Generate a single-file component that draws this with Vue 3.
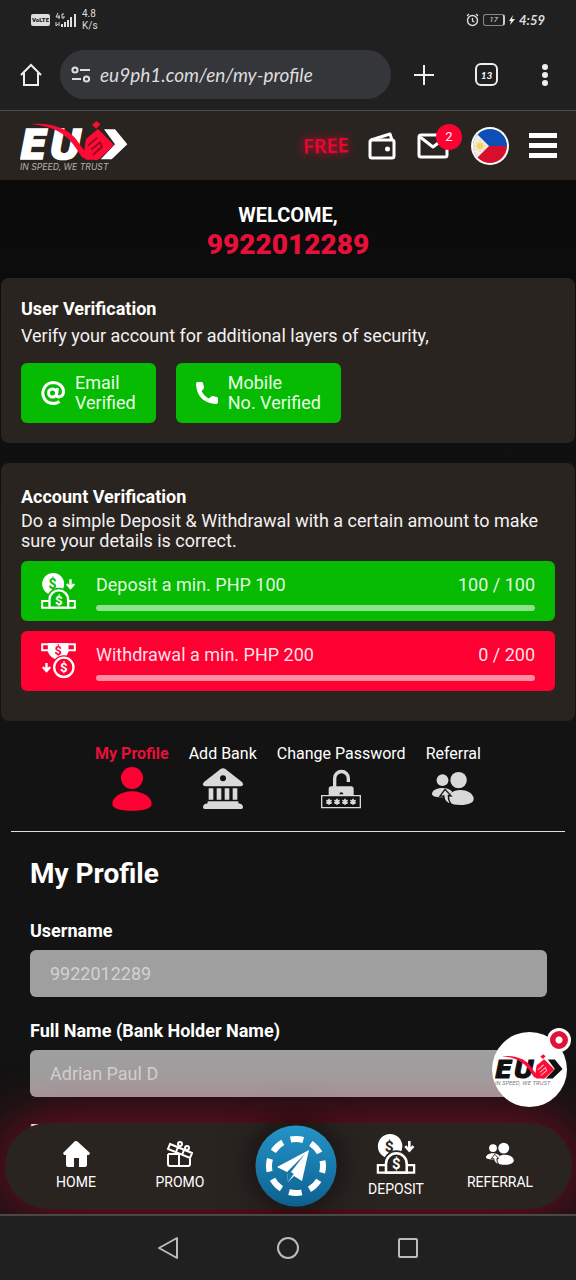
<script setup>
import { ref } from 'vue'

const tasks = [
  { id: 'deposit', label: 'Deposit a min. PHP 100', progress: '100 / 100', icon: '#icon-deposit' },
  { id: 'withdrawal', label: 'Withdrawal a min. PHP 200', progress: '0 / 200', icon: '#icon-withdraw' },
]

const tabs = [
  { label: 'My Profile', icon: '#icon-user', active: true },
  { label: 'Add Bank', icon: '#icon-bank' },
  { label: 'Change Password', icon: '#icon-password' },
  { label: 'Referral', icon: '#icon-referral' },
]

const username = ref('9922012289')
const fullName = ref('Adrian Paul D')
</script>

<template>
  <div class="phone">
    <svg class="defs" aria-hidden="true">
      <symbol id="logo" viewBox="0 0 324 150">
        <text y="113" font-family="DejaVu Sans, sans-serif" font-weight="700" font-style="italic" font-size="122" fill="currentColor" stroke="currentColor" stroke-width="5"><tspan x="0">E</tspan><tspan x="88">U</tspan></text>
        <path d="M252 25h33l37 45-47 45h-33l43-45z" fill="currentColor" />
        <path d="M34 9C92 4 142 22 166 52c14 18 24 36 34 46l-10 14C164 84 150 20 34 9z" fill="#ff0a35" />
        <path d="M216 12l13-12 12 10-12 13z" fill="#ff0a35" />
        <path d="M198 54l36-30 48 48-44 42q-6 4-16 2h-24q-12-8-6-22z" fill="#ff0a35" />
        <path d="M204 74l28-24M214 86l26-22 6 14-28 24" fill="none" stroke="var(--logo-cut)" stroke-width="5" />
        <text x="0" y="147" font-family="Inter, sans-serif" font-style="italic" font-size="26" fill="var(--logo-sub)">IN SPEED, WE TRUST</text>
      </symbol>

      <symbol id="icon-deposit" viewBox="0 0 104 108">
        <circle cx="36" cy="33" r="33" fill="currentColor" />
        <text x="34" y="49" text-anchor="middle" font-family="Roboto, sans-serif" font-weight="700" font-size="42" fill="var(--cut)">$</text>
        <circle cx="53" cy="80" r="36" fill="var(--cut)" />
        <path d="M3 84h98v20H3z" fill="none" stroke="currentColor" stroke-width="6" />
        <path d="M25 104V80a28 28 0 0 1 56 0v24z" fill="var(--cut)" stroke="currentColor" stroke-width="7" />
        <text x="53" y="95" text-anchor="middle" font-family="Roboto, sans-serif" font-weight="700" font-size="40" fill="currentColor">$</text>
        <path d="M88 19v26M77 33l11 12 11-12" fill="none" stroke="currentColor" stroke-width="7" />
      </symbol>

      <symbol id="icon-withdraw" viewBox="0 0 104 108">
        <path d="M3 4h98v18H3z" fill="none" stroke="currentColor" stroke-width="6" />
        <path d="M20 0h62v26q-8 24-31 24-22-2-31-24z" fill="currentColor" />
        <text x="51" y="36" text-anchor="middle" font-family="Roboto, sans-serif" font-weight="700" font-size="38" fill="var(--cut)">$</text>
        <circle cx="68" cy="73" r="36" fill="var(--cut)" />
        <circle cx="68" cy="73" r="29" fill="none" stroke="currentColor" stroke-width="7" />
        <text x="68" y="87" text-anchor="middle" font-family="Roboto, sans-serif" font-weight="700" font-size="40" fill="currentColor">$</text>
        <path d="M16 60v24M5 72l11 12 11-12" fill="none" stroke="currentColor" stroke-width="7" />
      </symbol>

      <symbol id="icon-user" viewBox="0 0 120 132">
        <circle cx="60" cy="33" r="33" fill="currentColor" />
        <path d="M60 73c36 0 59 20 59 37 0 14-20 21-59 21S1 124 1 110c0-17 23-37 59-37z" fill="currentColor" />
      </symbol>

      <symbol id="icon-bank" viewBox="0 0 120 132">
        <path d="M60 4q4 0 8 3l48 37q4 4 4 8 0 6-7 6H7q-7 0-7-6 0-4 4-8L52 7q4-3 8-3z" fill="currentColor" />
        <circle cx="60" cy="34" r="9" fill="#131313" />
        <path d="M17 64h14v34H17zM41 64h14v34H41zM65 64h14v34H65zM89 64h14v34H89z" fill="currentColor" />
        <path d="M14 103h92v6q14 2 14 12 0 5-5 5H5q-5 0-5-5 0-10 14-12z" fill="currentColor" />
      </symbol>

      <symbol id="icon-password" viewBox="0 0 120 132">
        <path d="M41 60V34a20 20 0 0 1 41 0v11" fill="none" stroke="currentColor" stroke-width="10" />
        <path d="M23 84V66q0-8 8-8h59q8 0 8 8v18z" fill="currentColor" />
        <path d="M55 82a6 6 0 0 1 12 0z" fill="#131313" />
        <path d="M2 86h116v36H2z" fill="#131313" stroke="currentColor" stroke-width="4" />
        <path d="M24 95v18M16 100l16 9M32 100l-16 9M48 95v18M40 100l16 9M56 100l-16 9M72 95v18M64 100l16 9M80 100l-16 9M96 95v18M88 100l16 9M104 100l-16 9" stroke="currentColor" stroke-width="5" />
      </symbol>

      <symbol id="icon-referral" viewBox="0 0 128 106">
        <circle cx="32" cy="26" r="18" fill="currentColor" />
        <circle cx="81" cy="26" r="25" fill="currentColor" />
        <path d="M32 50c14 0 24 4 30 12L44 78H28C10 78 0 74 0 68c0-10 14-18 32-18z" fill="currentColor" />
        <path d="M86 56c26 0 41 14 41 27 0 12-15 19-41 19-14 0-24-2-32-6-4-12-2-24 4-31 7-6 16-9 28-9z" fill="currentColor" />
        <path d="M40 54l18 20-8-1c-1 13 3 20 9 27-17-5-23-14-23-26l-12 1z" fill="currentColor" stroke="var(--cut)" stroke-width="4" />
      </symbol>
    </svg>

    <header class="browser">
      <div class="status">
        <div class="status-side">
          <span class="volte">VoLTE</span>
          <svg class="signal" viewBox="0 0 22 14" aria-hidden="true">
            <path d="M3 0L1 4h4M4 2v4M9 1H7v4h2V3" stroke="#ddd" fill="none" />
            <path d="M1 9v4M3 11l-2 2M4 13V9" stroke="#ddd" fill="none" />
            <path d="M7 11v3M10 9v5M13 7v7M16 4v10M20 1v13" stroke="#ddd" stroke-width="2" />
          </svg>
          <span class="speed">4.8<br>K/s</span>
        </div>
        <div class="status-side status-right">
          <svg width="13" height="14" viewBox="0 0 13 14" fill="none" stroke="#ddd" aria-hidden="true">
            <circle cx="6.500" cy="7.500" r="5" stroke-width="1.400" />
            <path d="M6.500 5v3l2 1M1 3l2-2M12 3l-2-2" stroke-width="1.300" />
          </svg>
          <span class="battery">17</span>
          <svg width="6" height="10" viewBox="0 0 6 10" aria-hidden="true"><path d="M4 0L0 6h2L1 10l5-6H3z" fill="#eee" /></svg>
          <span class="clock">4:59</span>
        </div>
      </div>
      <div class="toolbar">
        <button class="plain" aria-label="Home page">
          <svg width="24" height="24" viewBox="0 0 24 24" fill="none" stroke="#eee" stroke-width="2"><path d="M2 12L12 2l10 10M5 10v12h14V10" /></svg>
        </button>
        <label class="address">
          <svg width="20" height="18" viewBox="0 0 20 18" fill="none" stroke="#e0e0e0" stroke-width="2" aria-hidden="true">
            <circle cx="4" cy="4" r="2.600" /><path d="M9 4h10M1 13h9" /><circle cx="15.500" cy="13" r="2.600" />
          </svg>
          <input type="text" value="eu9ph1.com/en/my-profile" aria-label="Address">
        </label>
        <button class="plain" aria-label="New tab">
          <svg width="22" height="22" viewBox="0 0 22 22" stroke="#eee" stroke-width="2"><path d="M11 1v20M1 11h20" /></svg>
        </button>
        <button class="plain tab-count" aria-label="Tabs, 13 open">13</button>
        <button class="plain" aria-label="Browser menu">
          <svg width="6" height="22" viewBox="0 0 6 22" fill="#eee"><circle cx="3" cy="3" r="3" /><circle cx="3" cy="11" r="3" /><circle cx="3" cy="19" r="3" /></svg>
        </button>
      </div>
    </header>

    <div class="viewport">
      <header class="site-header">
        <a href="#" class="brand" aria-label="EU9"><svg width="108" height="50"><use href="#logo" /></svg></a>
        <a href="#" class="free">FREE</a>
        <button class="plain" aria-label="Wallet">
          <svg width="28" height="28" viewBox="0 0 28 28" fill="none" stroke="#fff" stroke-width="3" stroke-linejoin="round">
            <rect x="2" y="8" width="24" height="18" rx="2" /><path d="M3 8l19-6 2 6" /><circle cx="19.500" cy="17" r="1.500" fill="#fff" stroke-width="2" />
          </svg>
        </button>
        <button class="plain mail" aria-label="Messages, 2 unread">
          <svg width="32" height="26" viewBox="0 0 32 26" fill="none" stroke="#fff" stroke-width="3" stroke-linejoin="round">
            <rect x="2" y="2" width="28" height="22" rx="2" /><path d="M3 4l13 10L29 4" />
          </svg>
          <span class="badge">2</span>
        </button>
        <button class="plain flag" aria-label="Country: Philippines">
          <svg width="38" height="38" viewBox="0 0 38 38">
            <clipPath id="flag-clip"><circle cx="19" cy="19" r="17" /></clipPath>
            <circle cx="19" cy="19" r="19" fill="#fff" />
            <g clip-path="url(#flag-clip)">
              <path d="M0 0h38v19H0z" fill="#0f4fb5" /><path d="M0 19h38v19H0z" fill="#d80f2c" />
              <path d="M0 1l18 18L0 37z" fill="#f3eee4" />
              <circle cx="9" cy="19" r="3" fill="#f6cf4a" />
              <path d="M9 13v12M3 19h12M5 15l8 8M13 15l-8 8" stroke="#f2d36a" stroke-width="1" />
            </g>
          </svg>
        </button>
        <button class="plain" aria-label="Menu">
          <svg width="28" height="26" viewBox="0 0 28 26" fill="#fff"><path d="M0 0h28v5H0zM0 10h28v5H0zM0 20h28v5H0z" /></svg>
        </button>
      </header>

      <main>
        <h1 class="welcome">WELCOME,<strong>9922012289</strong></h1>

        <section class="card">
          <h2>User Verification</h2>
          <p class="intro">Verify your account for additional layers of security,</p>
          <div class="verified">
            <button>
              <svg width="24" height="24" viewBox="0 0 24 24" fill="none" stroke="#fff" stroke-width="3" aria-hidden="true">
                <circle cx="11.500" cy="12" r="4" /><path d="M16.500 7l-1 6.500q0 2.500 2.500 2.500 4.500-1 4.500-5C22.500 5 17.500 1.500 12 1.500a10.500 10.500 0 1 0 6.500 19" />
              </svg>
              <span>Email<br>Verified</span>
            </button>
            <button>
              <svg width="22" height="22" viewBox="0 0 22 22" fill="#fff" aria-hidden="true">
                <path d="M1 0h5q1 0 2 5.500 0 1.500-2.500 3.500 3 5.500 7.500 7.500 2-2.500 3.500-2.500 5.500 1 5.500 2v4q0 2-3 2Q1 20 0 2q0-1.500 1-2z" />
              </svg>
              <span>Mobile<br>No. Verified</span>
            </button>
          </div>
        </section>

        <section class="card account">
          <h2>Account Verification</h2>
          <p>Do a simple Deposit &amp; Withdrawal with a certain amount to make sure your details is correct.</p>
          <div v-for="task in tasks" :key="task.id" class="task" :class="task.id">
            <svg width="35" height="36" aria-hidden="true"><use :href="task.icon" /></svg>
            <div class="task-body">
              <div class="task-text"><span>{{ task.label }}</span><span>{{ task.progress }}</span></div>
              <div class="bar"></div>
            </div>
          </div>
        </section>

        <nav class="tabs" aria-label="Account">
          <a v-for="tab in tabs" :key="tab.label" href="#" :class="{ active: tab.active }">
            {{ tab.label }}
            <svg width="42" height="44" aria-hidden="true"><use :href="tab.icon" /></svg>
          </a>
        </nav>

        <form class="profile">
          <h2>My Profile</h2>
          <label for="username">Username</label>
          <input id="username" v-model="username" type="text" readonly>
          <label for="fullname">Full Name (Bank Holder Name)</label>
          <input id="fullname" v-model="fullName" type="text" readonly>
          <label for="email">Email</label>
          <input id="email" type="email" readonly>
        </form>
      </main>

      <nav class="dock" aria-label="Main">
        <a href="#"><svg width="27" height="26" viewBox="0 0 27 26" fill="#fff"><path d="M13 0q1 0 2 1l12 11-1 2h-2v10q0 2-2 2h-6v-9h-5v9H5q-2 0-2-2V14H1l-1-2L11 1q1-1 2-1z" /></svg>HOME</a>
        <a href="#"><svg width="27" height="26" viewBox="0 0 27 26" fill="none" stroke="#fff" stroke-width="2">
          <path d="M2 13v10q0 2 2 2h18q2 0 2-2V16M2 13h11M13 13v12M4 3l22 9-2 5L2 8zM12 6l-2 5M18 9l-2 5" /><circle cx="14" cy="3" r="2" /><circle cx="21" cy="7" r="2" />
        </svg>PROMO</a>
        <a href="#" class="telegram" aria-label="Telegram">
          <svg width="82" height="82" viewBox="0 0 82 82">
            <defs><linearGradient id="sky" x2="0" y2="1"><stop stop-color="#2594c8" /><stop offset="1" stop-color="#0d608f" /></linearGradient></defs>
            <circle cx="41" cy="41" r="40.500" fill="url(#sky)" />
            <circle cx="41" cy="41" r="27" fill="none" stroke="#fff" stroke-width="6" stroke-dasharray="13 8.200" stroke-dashoffset="6" />
            <path d="M22 42l32-17-7 31-8-5-6 6-1-10z" fill="#fff" /><path d="M32 47l18-18-12 21-5 7z" fill="#1678a9" /><path d="M36 47l14-18-4 25z" fill="#fff" />
          </svg>
        </a>
        <a href="#"><svg width="40" height="40" aria-hidden="true"><use href="#icon-deposit" /></svg>DEPOSIT</a>
        <a href="#"><svg width="28" height="26" aria-hidden="true"><use href="#icon-referral" /></svg>REFERRAL</a>
      </nav>

      <button class="plain chat" aria-label="Open chat">
        <svg width="68" height="32"><use href="#logo" /></svg>
        <span class="chat-dot"></span>
      </button>
    </div>

    <footer class="system">
      <button class="plain" aria-label="Back"><svg width="22" height="24" viewBox="0 0 22 24" fill="none" stroke="#bbb" stroke-width="2" stroke-linejoin="round"><path d="M20 2v20L2 12z" /></svg></button>
      <button class="plain" aria-label="Home"><svg width="22" height="22" viewBox="0 0 22 22" fill="none" stroke="#bbb" stroke-width="2"><circle cx="11" cy="11" r="10" /></svg></button>
      <button class="plain" aria-label="Recent apps"><svg width="22" height="22" viewBox="0 0 22 22" fill="none" stroke="#bbb" stroke-width="2"><rect x="2" y="2" width="18" height="18" rx="1" /></svg></button>
    </footer>
  </div>
</template>

<style>
body {
  background: #131313;
}
</style>

<style scoped>
.phone {
  height: 100vh;
  display: flex;
  flex-direction: column;
  background: #131313;
  color: #fff;
  font-family: Roboto, "Liberation Sans", sans-serif;
  font-size: 18px;
  line-height: 20px;
}
.phone * {
  box-sizing: border-box;
}
svg {
  display: block;
  flex: none;
}
.defs {
  display: none;
}
a {
  color: inherit;
  text-decoration: none;
}
.plain {
  display: block;
  padding: 0;
  border: 0;
  background: none;
  color: inherit;
  font: inherit;
}

.browser {
  flex: none;
  background: #202020;
  border-bottom: 1px solid #4a4a4a;
}
.status {
  display: flex;
  justify-content: space-between;
  align-items: center;
  height: 40px;
  padding: 0 31px;
  color: #ddd;
}
.status-side {
  display: flex;
  align-items: center;
  gap: 5px;
}
.status-right {
  gap: 4px;
}
.volte {
  padding: 0 1px;
  border-radius: 2px;
  background: #ddd;
  color: #202020;
  font-size: 6px;
  font-weight: 900;
  line-height: 12px;
}
.signal {
  width: 22px;
  height: 14px;
}
.speed {
  font-size: 10px;
  line-height: 12px;
}
.battery {
  width: 22px;
  border: 1px solid #888;
  border-right: 2px solid #ccc;
  border-radius: 3px;
  font-size: 8px;
  font-style: italic;
  line-height: 10px;
  text-align: center;
}
.clock {
  font-family: Lato, sans-serif;
  font-size: 13px;
  font-style: italic;
  font-weight: 700;
}
.toolbar {
  display: flex;
  align-items: center;
  padding: 10px 28px 11px 19px;
}
.address {
  flex: 1;
  display: flex;
  align-items: center;
  gap: 9px;
  height: 49px;
  margin: 0 22px 0 17px;
  padding: 0 11px;
  border-radius: 25px;
  background: #35363a;
}
.address input {
  flex: 1;
  min-width: 0;
  padding: 0;
  border: 0;
  background: none;
  color: #ddd;
  font: italic 19px/28px Lato, sans-serif;
}
.tab-count {
  width: 23px;
  height: 23px;
  margin: 0 44px 0 40px;
  border: 2px solid #eee;
  border-radius: 6px;
  font: italic 700 10px Lato, sans-serif;
}

.viewport {
  position: relative;
  flex: 1;
  min-height: 0;
  overflow: hidden;
  background: linear-gradient(#090909, #131313 500px);
}
.site-header {
  display: flex;
  align-items: center;
  height: 69px;
  padding: 0 19px 0 20px;
  background: #2a2421;
}
.brand {
  margin-right: auto;
  --logo-cut: #8a0a20;
  --logo-sub: #b5b1ae;
}
.free {
  margin-right: 19px;
  color: #e8082f;
  font: 600 20px "Open Sans", sans-serif;
  text-shadow: 0 0 10px #ff0033;
  transform: rotate(-2deg);
}
.mail {
  position: relative;
  margin: 0 22px 0 21px;
}
.badge {
  position: absolute;
  top: -9px;
  right: -13px;
  width: 26px;
  height: 26px;
  border-radius: 50%;
  background: #ff0033;
  font-size: 13px;
  line-height: 26px;
  text-align: center;
}
.flag {
  margin-right: 20px;
}

.welcome {
  margin: 0;
  padding: 24px 0 14px;
  font-size: 20px;
  line-height: 22px;
  text-align: center;
}
.welcome strong {
  display: block;
  color: #e8103a;
  font-size: 28px;
  line-height: 38px;
}
.card {
  margin: 0 1px 20px;
  padding: 20px;
  border-radius: 8px;
  background: #2a2421;
}
.card h2 {
  margin: 0;
  font-size: 18px;
  line-height: 22px;
}
.card p {
  margin: 0;
  color: #f2f2f2;
}
.card .intro {
  margin: 6px 0 17px;
}
.verified {
  display: flex;
  gap: 20px;
}
.verified button {
  display: flex;
  align-items: center;
  gap: 10px;
  height: 60px;
  padding: 0 20px;
  border: 0;
  border-radius: 6px;
  background: #06bb02;
  color: #e6ffe5;
  font: inherit;
  text-align: left;
}
.account {
  padding-top: 23px;
  padding-bottom: 30px;
}
.account p {
  margin: 3px 0 10px;
}
.task {
  display: flex;
  align-items: center;
  gap: 20px;
  height: 60px;
  padding: 0 20px;
  border-radius: 6px;
}
.task + .task {
  margin-top: 10px;
}
.deposit {
  --cut: #06bb02;
  background: #06bb02;
}
.withdrawal {
  --cut: #ff0033;
  background: #ff0033;
}
.task-body {
  flex: 1;
  padding-top: 4px;
}
.task-text {
  display: flex;
  justify-content: space-between;
  color: rgba(255, 255, 255, 0.9);
}
.bar {
  height: 6px;
  margin-top: 10px;
  border-radius: 3px;
  background: rgba(255, 255, 255, 0.55);
}

.tabs {
  --cut: #131313;
  display: flex;
  justify-content: center;
  gap: 20px;
  margin: 0 11px;
  padding: 3px 0 20px;
  border-bottom: 1px solid #ddd;
  font-size: 16px;
}
.tabs a {
  display: flex;
  flex-direction: column;
  align-items: center;
  gap: 3px;
}
.tabs svg {
  color: #d9d9d9;
}
.tabs .active {
  color: #e8103a;
  font-weight: 700;
}
.tabs .active svg {
  color: #ff0033;
}

.profile {
  display: flex;
  flex-direction: column;
  padding: 24px 29px 0 30px;
}
.profile h2 {
  margin: 0 0 29px;
  font-size: 28px;
  line-height: 36px;
}
.profile label {
  font-weight: 700;
  line-height: 20px;
}
.profile input {
  height: 47px;
  margin: 9px 0 24px;
  padding: 0 20px;
  border: 0;
  border-radius: 6px;
  background: #9f9f9f;
  color: #d2d2d2;
  font: 18px Roboto, sans-serif;
}

.dock {
  --cut: #2a2421;
  position: absolute;
  right: 4px;
  bottom: 5px;
  left: 5px;
  display: grid;
  grid-template-columns: 104fr 104fr 128fr 72fr 136fr;
  align-items: center;
  justify-items: center;
  height: 86px;
  padding: 0 4px 0 19px;
  border-radius: 43px;
  background: #2a2421;
  box-shadow: 0 0 56px 4px rgba(255, 0, 51, 0.45);
  font-size: 14px;
  line-height: 18px;
}
.dock a {
  display: flex;
  flex-direction: column;
  align-items: center;
  gap: 6px;
}
.telegram {
  border-radius: 50%;
  box-shadow: 0 0 36px rgba(0, 0, 0, 0.7);
}
.chat {
  --logo-cut: #ffb3bf;
  --logo-sub: #777;
  position: absolute;
  right: 9px;
  bottom: 107px;
  width: 75px;
  height: 75px;
  padding-left: 3px;
  border-radius: 50%;
  background: #fff;
  color: #111;
}
.chat-dot {
  position: absolute;
  top: -4px;
  right: -4px;
  width: 24px;
  height: 24px;
  border: 3px solid #fff;
  border-radius: 50%;
  background: radial-gradient(circle, #fff 3px, #dd1438 4px);
}

.system {
  flex: none;
  display: flex;
  align-items: center;
  justify-content: center;
  gap: 98px;
  height: 66px;
  border-top: 2px solid #484848;
  background: #202020;
}
</style>
